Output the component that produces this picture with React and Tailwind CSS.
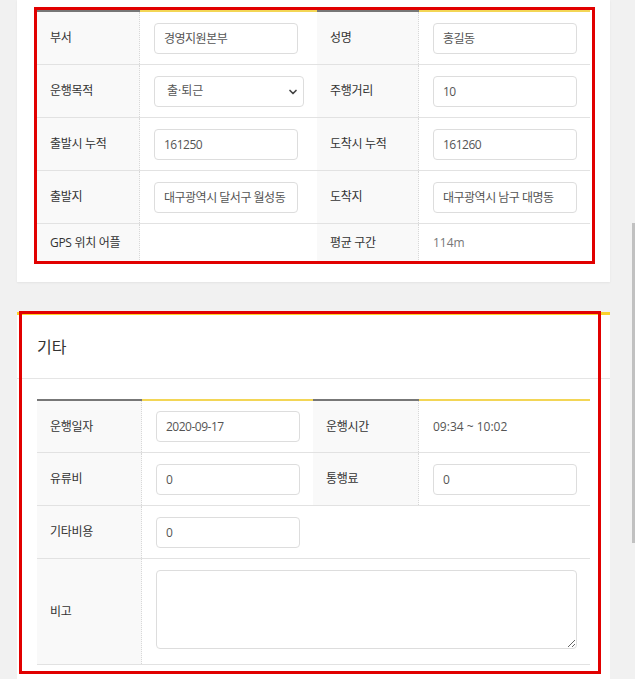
import { ChevronDown } from 'lucide-react';

const font = "font-['Open_Sans','Noto_Sans_CJK_KR',sans-serif]";

function TopStrip({ cols }) {
    return (
        <div className={`grid ${cols}`}>
            <div className="h-[2px] bg-[#777]" />
            <div className="h-[2px] bg-[#f3d656]" />
            <div className="h-[2px] bg-[#777]" />
            <div className="h-[2px] bg-[#f3d656]" />
        </div>
    );
}

function Label({ children }) {
    return (
        <div className="flex items-center border-r border-dotted border-[#d8d8d8] bg-[#f9f9f9] pl-[13px] text-[12px] tracking-[-0.3px] text-[#333]">
            {children}
        </div>
    );
}

function Value({ children, className = '' }) {
    return <div className={`flex items-center pl-[14px] ${className}`}>{children}</div>;
}

function Input({ value }) {
    return (
        <input
            className="h-[31px] w-[144px] rounded-[4px] border border-[#ddd] bg-white px-[9px] text-[12px] tracking-[-0.5px] text-[#555] outline-none"
            defaultValue={value}
        />
    );
}

function Select() {
    return (
        <div className="relative">
            <select className="h-[31px] w-[150px] appearance-none rounded-[4px] border border-[#ddd] bg-white pl-[12px] text-[12px] text-[#555] outline-none">
                <option>출·퇴근</option>
                <option>업무</option>
            </select>
            <ChevronDown className="pointer-events-none absolute right-[5px] top-[10px] h-[12px] w-[12px] text-[#444]" strokeWidth={3.4} />
        </div>
    );
}

export default function App() {
    const cols1 = 'grid-cols-[103px_177px_102px_171px]';
    const cols2 = 'grid-cols-[105px_171px_106px_171px]';
    const row = 'grid h-[53px] border-b border-[#e2e2e2]';

    return (
        <div className={`relative h-[679px] overflow-hidden bg-[#f1f1f1] ${font}`}>
            <div className="relative ml-[17px] w-[593px] bg-white px-[20px] pt-[10px] pb-[20px] shadow-[0_1px_2px_rgba(0,0,0,0.06)]">
                <TopStrip cols={cols1} />
                <div className={`${row} ${cols1}`}>
                    <Label>부서</Label>
                    <Value><Input value="경영지원본부" /></Value>
                    <Label>성명</Label>
                    <Value><Input value="홍길동" /></Value>
                </div>
                <div className={`${row} ${cols1}`}>
                    <Label>운행목적</Label>
                    <Value><Select /></Value>
                    <Label>주행거리</Label>
                    <Value><Input value="10" /></Value>
                </div>
                <div className={`${row} ${cols1}`}>
                    <Label>출발시 누적</Label>
                    <Value><Input value="161250" /></Value>
                    <Label>도착시 누적</Label>
                    <Value><Input value="161260" /></Value>
                </div>
                <div className={`${row} ${cols1}`}>
                    <Label>출발지</Label>
                    <Value><Input value="대구광역시 달서구 월성동" /></Value>
                    <Label>도착지</Label>
                    <Value><Input value="대구광역시 남구 대명동" /></Value>
                </div>
                <div className={`grid h-[38px] ${cols1}`}>
                    <Label>GPS 위치 어플</Label>
                    <Value />
                    <Label>평균 구간</Label>
                    <Value className="text-[12px] text-[#777]">114m</Value>
                </div>
                <div className="pointer-events-none absolute left-[17px] top-[7px] h-[257px] w-[561px] border-[3px] border-[#e10000]" />
            </div>

            <div className="relative mt-[30px] ml-[17px] w-[593px] border-t-[3px] border-[#fbd22c] bg-white pb-[20px]">
                <div className="flex h-[64px] items-center border-b border-[#e5e5e5] pl-[20px] text-[16px] text-[#333]">기타</div>
                <div className="px-[20px] pt-[20px]">
                    <TopStrip cols={cols2} />
                    <div className={`grid h-[52px] border-b border-[#e2e2e2] ${cols2}`}>
                        <Label>운행일자</Label>
                        <Value><Input value="2020-09-17" /></Value>
                        <Label>운행시간</Label>
                        <Value className="text-[12px] text-[#555]">09:34 ~ 10:02</Value>
                    </div>
                    <div className={`${row} ${cols2}`}>
                        <Label>유류비</Label>
                        <Value><Input value="0" /></Value>
                        <Label>통행료</Label>
                        <Value><Input value="0" /></Value>
                    </div>
                    <div className={`${row} ${cols2}`}>
                        <Label>기타비용</Label>
                        <Value className="col-span-3"><Input value="0" /></Value>
                    </div>
                    <div className={`grid h-[106px] border-b border-[#e2e2e2] ${cols2}`}>
                        <Label>비고</Label>
                        <div className="col-span-3 pt-[11px] pl-[14px]">
                            <textarea className="block h-[79px] w-[421px] rounded-[4px] border border-[#ddd] bg-white p-[9px] text-[12px] text-[#555] outline-none" />
                        </div>
                    </div>
                </div>
                <div className="pointer-events-none absolute left-[2px] top-[-4px] h-[363px] w-[582px] border-[3px] border-[#e10000]" />
            </div>

            <div className="absolute right-0 top-[223px] h-[320px] w-[3px] bg-[#c1c1c1]" />
        </div>
    );
}
